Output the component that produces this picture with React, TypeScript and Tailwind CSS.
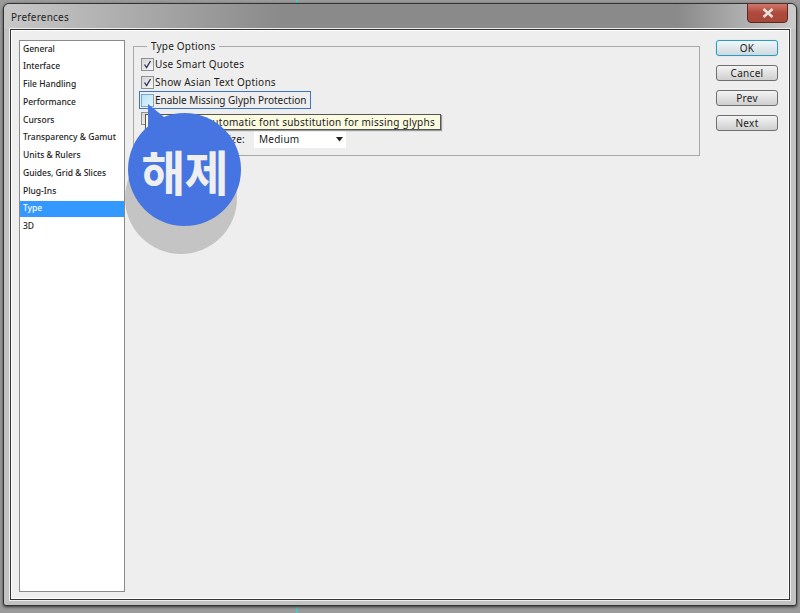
const categories = [
  "General",
  "Interface",
  "File Handling",
  "Performance",
  "Cursors",
  "Transparency & Gamut",
  "Units & Rulers",
  "Guides, Grid & Slices",
  "Plug-Ins",
  "Type",
  "3D",
];

const buttons = ["OK", "Cancel", "Prev", "Next"];

function CheckBox({ checked }: { checked?: boolean }) {
  return (
    <span className="flex h-[13px] w-[13px] shrink-0 items-center justify-center border border-[#8e8f8f] bg-gradient-to-br from-[#d4d4d4] to-[#f8f8f8]">
      {checked && (
        <svg width="9" height="9" viewBox="0 0 9 9" fill="none" stroke="#27305c" strokeWidth="1.3">
          <path d="M1.5 4.5 L3.6 7.5 L7.5 1" />
        </svg>
      )}
    </span>
  );
}

export default function App() {
  return (
    <div className="relative h-[613px] w-[800px] overflow-hidden bg-[#9a9a9a] font-['Noto_Sans','DejaVu_Sans',sans-serif] text-[10px] text-[#1c1c1c]">
      {/* stray guide line behind the dialog */}
      <div className="absolute left-[296px] top-0 h-[613px] w-[2px] bg-[#4fc4c4]" />

      <div className="relative flex h-[603px] w-[794px] translate-x-[3px] translate-y-[3px] flex-col rounded-t-[6px] rounded-b-[3px] border border-[#333333] bg-[#c2c2c2] shadow-[0_1px_3px_#333333]">
        {/* title bar */}
        <div className="flex h-[25px] shrink-0 items-start justify-between rounded-t-[6px] bg-[linear-gradient(to_right,#c8c8c8,#8a8a8a_35%,#8a8a8a_85%,#cccccc)] pl-[7px] pr-[8px]">
          <span className="pt-[6px] text-[10px] tracking-[0.2px] text-[#222]">Preferences</span>
          <button
            type="button"
            className="-mt-px flex h-[20px] w-[41px] items-center justify-center rounded-b-[4px] border border-[#5a2a22] bg-gradient-to-b from-[#d0766a] via-[#ad4a3c] to-[#a8483a]"
          >
            <svg width="12" height="10" viewBox="0 0 12 10" fill="none" stroke="#e4e4e4" strokeWidth="2.4">
              <path d="M1.5 1 L10.5 9 M10.5 1 L1.5 9" />
            </svg>
          </button>
        </div>

        {/* dialog body */}
        <div className="mx-[6px] flex h-[571px] gap-[8px] border border-[#333333] bg-[#eeeeee] pt-[10px] pl-[8px] shadow-[inset_0_0_0_1px_#ffffff,0_0_0_1px_#eeeeee]">
          <div className="flex h-[552px] w-[106px] shrink-0 flex-col gap-[2px] border border-[#8a8a8a] bg-white text-[8.5px] font-medium whitespace-nowrap">
            {categories.map((name) => (
              <div
                key={name}
                className={
                  name === "Type"
                    ? "flex h-[15.75px] items-center bg-[#3399ff] pl-[3px] text-white"
                    : "flex h-[15.75px] items-center pl-[3px]"
                }
              >
                {name}
              </div>
            ))}
          </div>

          <fieldset className="h-[116px] w-[567px] shrink-0 border border-[#a9a9a9] pl-[7px]">
            <legend className="ml-[6px] px-[4px] text-[10px] leading-[13px] tracking-[0.2px] text-[#222]">Type Options</legend>
            <div className="flex flex-col pt-[2px] tracking-[0.25px] whitespace-nowrap">
              <label className="flex h-[18px] items-center gap-[1px]">
                <CheckBox checked />
                <span>Use Smart Quotes</span>
              </label>
              <label className="flex h-[18px] items-center gap-[1px]">
                <CheckBox checked />
                <span>Show Asian Text Options</span>
              </label>
              <label className="-ml-[2px] flex h-[18px] w-[172px] items-center gap-[1px] border border-[#3a76c4] pl-[1px] tracking-normal">
                <span className="h-[13px] w-[13px] shrink-0 border border-[#79a8c8] bg-gradient-to-br from-[#b9e2f8] to-[#e6f6fd]" />
                <span>Enable Missing Glyph Protection</span>
              </label>
              <label className="flex h-[18px] items-center gap-[1px]">
                <CheckBox />
              </label>
              <div className="flex h-[24px] items-center gap-[9px]">
                <span className="w-[104px] text-right">Font Preview Size:</span>
                <div className="flex h-[17px] w-[92px] items-center justify-between bg-white pl-[5px] pr-[2px]">
                  <span>Medium</span>
                  <svg width="9" height="5" viewBox="0 0 9 5" fill="#222">
                    <path d="M1 0 H8 L4.5 4.5 Z" />
                  </svg>
                </div>
              </div>
            </div>
          </fieldset>

          <div className="ml-[8px] flex flex-col gap-[9px]">
            {buttons.map((label) => (
              <button
                key={label}
                type="button"
                className={
                  label === "OK"
                    ? "h-[16px] w-[62px] rounded-[3px] border border-[#2b9bc4] bg-gradient-to-b from-[#f0f8fb] to-[#cfd9dd] text-[10px] leading-[13px] tracking-[0.3px] shadow-[0_0_1px_#6fd0f0]"
                    : "h-[16px] w-[62px] rounded-[3px] border border-[#6f6f6f] bg-gradient-to-b from-[#f4f4f4] to-[#cfcfcf] text-[10px] leading-[13px] tracking-[0.3px]"
                }
              >
                {label}
              </button>
            ))}
          </div>
        </div>
      </div>

      {/* tooltip */}
      <div className="absolute left-[145px] top-[114px] flex h-[16px] w-[296px] items-center justify-end border border-[#555] bg-[#fbfbe0] pr-[5px] tracking-[0.25px] whitespace-nowrap shadow-[1px_1px_1px_#999]">
        Enable automatic font substitution for missing glyphs
      </div>

      {/* callout badge */}
      <div className="absolute left-[125px] top-[142px] h-[112px] w-[112px] rounded-full bg-[#c4c4c4]" />
      <svg className="absolute left-[147px] top-[103px]" width="40" height="40" viewBox="0 0 40 40" fill="#4674e0">
        <path d="M1 1 L22 18 L1 32 Z" />
      </svg>
      <div className="absolute left-[128px] top-[113px] flex h-[113px] w-[113px] items-center justify-center rounded-full bg-[#4674e0] font-['Noto_Sans_CJK_KR',sans-serif] text-[48px] font-bold tracking-[-1px] text-[#efefef]">
        해제
      </div>
    </div>
  );
}
